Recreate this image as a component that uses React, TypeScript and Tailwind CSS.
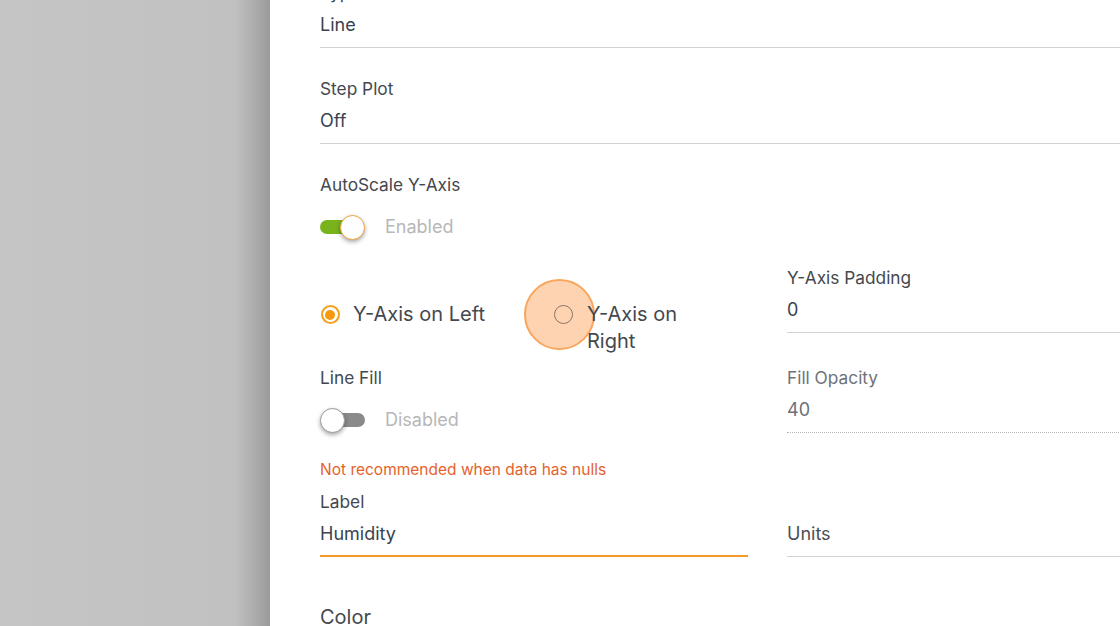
import React from "react"

const font = { fontFamily: "Inter, 'Noto Sans', sans-serif" }

function Field({
  label,
  value,
  muted = false,
  line = "solid",
}: {
  label: string
  value: string
  muted?: boolean
  line?: "solid" | "dotted" | "focus"
}) {
  const border =
    line === "focus"
      ? "border-b-2 border-[#f39a2b] pb-[9px]"
      : line === "dotted"
        ? "border-b border-dotted border-[#b8b8b8] pb-[10px]"
        : "border-b border-[#d2d2d2] pb-[10px]"
  return (
    <div>
      <div className={`text-[17.3px] leading-[24px] ${muted ? "text-[#6e7278]" : "text-[#44484e]"}`}>{label}</div>
      <div className={`mt-2 ${border}`}>
        <div className={`text-[18px] leading-[24px] ${muted ? "text-[#6b7079]" : "text-[#3a4250]"}`}>{value}</div>
      </div>
    </div>
  )
}

function Toggle({ on, label }: { on: boolean; label: string }) {
  return (
    <div className="flex h-[30px] items-center">
      <div className="relative h-[30px] w-[46px]">
        <div
          className={`absolute top-[8px] h-[14px] rounded-full ${
            on ? "left-0 w-[42px] bg-[#78b31b]" : "left-[2px] w-[43px] bg-[#8a8a8a]"
          }`}
        />
        <div
          className={`absolute top-[3px] h-[25px] w-[25px] rounded-full bg-white shadow-[0_2px_4px_rgba(0,0,0,0.35)] ${
            on ? "left-[20px] border-[1.5px] border-[#f0a23e]" : "left-0 border border-[#9a9a9a]"
          }`}
        />
      </div>
      <span className="ml-[19px] text-[18px] leading-[24px] text-[#b7b7b7]">{label}</span>
    </div>
  )
}

export default function App() {
  return (
    <div className="flex h-[626px] w-[1120px] overflow-hidden" style={font}>
      <div className="w-[270px] shrink-0 bg-[linear-gradient(to_right,#c5c5c5_0px,#c1c1c1_235px,#a4a4a4_262px,#9a9a9a_270px)]" />
      <div className="flex-1 bg-white pl-[50px]">
        <div className="-mt-[19px] w-[895px]">
          <Field label="Type" value="Line" />
          <div className="mt-[29px]">
            <Field label="Step Plot" value="Off" />
          </div>

          <div className="mt-[29px]">
            <div className="text-[17.3px] leading-[24px] text-[#44484e]">AutoScale Y-Axis</div>
            <div className="mt-[15px]">
              <Toggle on label="Enabled" />
            </div>
          </div>

          <div className="mt-[24px] grid grid-cols-[428px_428px] gap-x-[39px]">
            {/* row: axis side + padding */}
            <div className="h-[100px] pt-[35px]">
              <div className="flex items-start">
                <label className="flex items-center">
                  <span className="flex h-[27px] w-[20px] items-center justify-center">
                    <span className="flex h-[19px] w-[19px] items-center justify-center rounded-full border-2 border-[#f5a01c]">
                      <span className="h-[10px] w-[10px] rounded-full bg-[#f59a0e]" />
                    </span>
                  </span>
                  <span className="ml-[13px] text-[20px] leading-[27px] text-[#44484e]">Y-Axis on Left</span>
                </label>
                <label className="relative ml-[69px] flex items-start">
                  <span className="absolute -left-[30px] -top-[22px] h-[71px] w-[71px] rounded-full border-2 border-[#f9a65c] bg-[#fdd3b2]" />
                  <span className="relative flex h-[27px] w-[20px] items-center justify-center">
                    <span className="h-[19px] w-[19px] rounded-full border-[1.5px] border-[#8c7463]" />
                  </span>
                  <span className="relative ml-[13px] w-[115px] text-[20px] leading-[27px] text-[#44484e]">
                    Y-Axis on Right
                  </span>
                </label>
              </div>
            </div>
            <div>
              <Field label="Y-Axis Padding" value="0" />
            </div>

            {/* row: fill */}
            <div>
              <div className="text-[17.3px] leading-[24px] text-[#44484e]">Line Fill</div>
              <div className="mt-[15px]">
                <Toggle on={false} label="Disabled" />
              </div>
              <div className="mt-[25px] text-[15.5px] leading-[20px] text-[#e5622b]">Not recommended when data has nulls</div>
            </div>
            <div>
              <Field label="Fill Opacity" value="40" muted line="dotted" />
            </div>

            {/* row: label + units */}
            <div className="mt-[10px]">
              <Field label="Label" value="Humidity" line="focus" />
            </div>
            <div className="mt-[42px]">
              <div className="border-b border-[#d2d2d2] pb-[10px]">
                <div className="text-[18px] leading-[24px] text-[#4a4f56]">Units</div>
              </div>
            </div>
          </div>

          <div className="mt-[47px] text-[20px] leading-[27px] text-[#44484e]">Color</div>
        </div>
      </div>
    </div>
  )
}
